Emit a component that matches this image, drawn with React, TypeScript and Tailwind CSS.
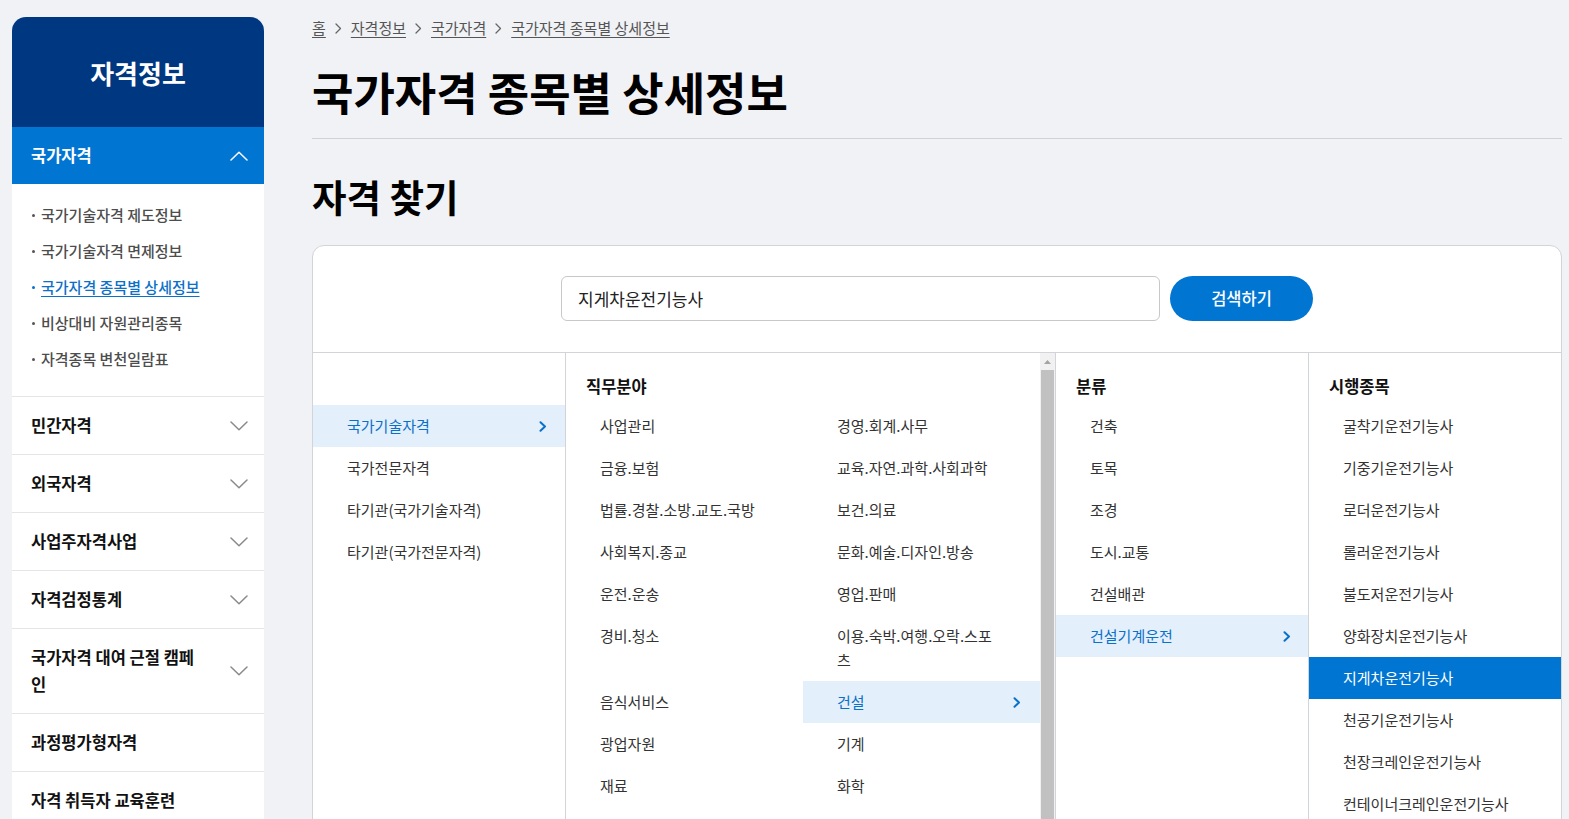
import React from 'react';

const FONT = "font-['Noto_Sans_CJK_KR','Noto_Sans',sans-serif]";

const subMenu = [
  { label: '국가기술자격 제도정보' },
  { label: '국가기술자격 면제정보' },
  { label: '국가자격 종목별 상세정보', active: true },
  { label: '비상대비 자원관리종목' },
  { label: '자격종목 변천일람표' },
];

const sideMenu = [
  { label: '민간자격', more: true },
  { label: '외국자격', more: true },
  { label: '사업주자격사업', more: true },
  { label: '자격검정통계', more: true },
  { label: '국가자격 대여 근절 캠페인', more: true },
  { label: '과정평가형자격', more: false },
  { label: '자격 취득자 교육훈련', more: false },
];

const types = ['국가기술자격', '국가전문자격', '타기관(국가기술자격)', '타기관(국가전문자격)'];

const fields = [
  '사업관리', '경영.회계.사무',
  '금융.보험', '교육.자연.과학.사회과학',
  '법률.경찰.소방.교도.국방', '보건.의료',
  '사회복지.종교', '문화.예술.디자인.방송',
  '운전.운송', '영업.판매',
  '경비.청소', '이용.숙박.여행.오락.스포츠',
  '음식서비스', '건설',
  '광업자원', '기계',
  '재료', '화학',
];

const groups = ['건축', '토목', '조경', '도시.교통', '건설배관', '건설기계운전'];

const items = [
  '굴착기운전기능사',
  '기중기운전기능사',
  '로더운전기능사',
  '롤러운전기능사',
  '불도저운전기능사',
  '양화장치운전기능사',
  '지게차운전기능사',
  '천공기운전기능사',
  '천장크레인운전기능사',
  '컨테이너크레인운전기능사',
];

const ChevronRight = () => (
  <svg width="8" height="11" viewBox="0 0 8 11" fill="none" className="shrink-0 self-center">
    <path d="M1.5 1.2 L6 5.5 L1.5 9.8" stroke="#0b70c8" strokeWidth="2" strokeLinecap="round" strokeLinejoin="round" />
  </svg>
);

const Caret = ({ up, color }: { up?: boolean; color: string }) => (
  <svg width="18" height="10" viewBox="0 0 18 10" fill="none" className="shrink-0">
    <path d={up ? 'M1 9 L9 1.2 L17 9' : 'M1 1 L9 8.8 L17 1'} stroke={color} strokeWidth="1.5" strokeLinecap="round" strokeLinejoin="round" />
  </svg>
);

const Crumb = () => (
  <svg width="7" height="11" viewBox="0 0 7 11" fill="none">
    <path d="M1 1 L5.5 5.5 L1 10" stroke="#666" strokeWidth="1.3" strokeLinecap="round" strokeLinejoin="round" />
  </svg>
);

const Heading = ({ children }: { children?: React.ReactNode }) => (
  <div className="h-[52px] pt-[21px] pl-5 text-[16.5px] leading-6 font-bold text-[#111]">{children}</div>
);

function Sidebar() {
  return (
    <aside className="w-[252px] shrink-0 ml-[12px] mt-[17px]">
      <div className="h-[110px] rounded-t-[14px] bg-[#003781] flex items-center justify-center text-white text-[26px] font-bold">
        자격정보
      </div>
      <div className="h-[57px] bg-[#0075d2] flex items-center justify-between pl-[19px] pr-[16px] text-white text-[16.5px] font-bold">
        <span>국가자격</span>
        <Caret up color="#ffffff" />
      </div>
      <ul className="bg-white pt-[13px] pb-[19px]">
        {subMenu.map((s) => (
          <li key={s.label} className="h-[36px] flex items-center pl-[20px] text-[15px] font-medium">
            <span className={`w-[3px] h-[3px] rounded-full mr-[6px] ${s.active ? 'bg-[#0b70c8]' : 'bg-[#555]'}`}></span>
            <span className={s.active ? 'text-[#0b70c8] underline underline-offset-[3px]' : 'text-[#4d4d4d]'}>{s.label}</span>
          </li>
        ))}
      </ul>
      <ul className="bg-white">
        {sideMenu.map((m) => (
          <li key={m.label} className="border-t border-[#e5e5e5] py-[15px] flex items-center justify-between pl-[19px] pr-[16px]">
            <span className="max-w-[176px] text-[16.5px] leading-[27px] font-bold text-[#111]">{m.label}</span>
            {m.more && <Caret color="#8a8a8a" />}
          </li>
        ))}
      </ul>
    </aside>
  );
}

function Finder() {
  return (
    <div className="mt-[27px] w-[1250px] rounded-t-[12px] border border-[#d3d4d9] bg-white">
      <div className="flex justify-center gap-[10px] pt-[30px] pb-[31px]">
        <input
          readOnly
          defaultValue="지게차운전기능사"
          className="w-[599px] h-[45px] rounded-[6px] border border-[#c8c8c8] px-[16px] text-[17px] text-[#222] outline-none"
        />
        <button className="w-[143px] h-[45px] rounded-full bg-[#0075d2] text-white text-[16.5px] font-medium">검색하기</button>
      </div>

      <div className="flex border-t border-[#d3d4d9] text-[15px] text-[#333]">
        {/* 자격구분 */}
        <div className="w-[253px] border-r border-[#d3d4d9]">
          <Heading />
          {types.map((t, i) => (
            <div
              key={t}
              className={`h-[42px] flex items-center justify-between pl-[34px] pr-[18px] ${i === 0 ? 'bg-[#e3effb] text-[#0b70c8]' : ''}`}
            >
              <span>{t}</span>
              {i === 0 && <ChevronRight />}
            </div>
          ))}
        </div>

        {/* 직무분야 */}
        <div className="w-[490px] flex border-r border-[#d3d4d9]">
          <div className="w-[474px]">
            <Heading>직무분야</Heading>
            <div className="grid grid-cols-2">
              {fields.map((f) => {
                const sel = f === '건설';
                return (
                  <div
                    key={f}
                    className={`flex items-start justify-between py-[9px] pl-[34px] pr-[19px] ${sel ? 'bg-[#e3effb] text-[#0b70c8]' : ''}`}
                  >
                    <span className="max-w-[163px] leading-6">{f}</span>
                    {sel && <ChevronRight />}
                  </div>
                );
              })}
            </div>
            <div className="h-[30px]"></div>
          </div>
          <div className="w-[15px] bg-[#f1f1f1] flex flex-col items-center">
            <div className="h-[17px] flex items-center justify-center">
              <svg width="7" height="4" viewBox="0 0 7 4">
                <path d="M0 4 L3.5 0 L7 4 Z" fill="#a3a3a3" />
              </svg>
            </div>
            <div className="w-[13px] flex-1 bg-[#c1c1c1]"></div>
          </div>
        </div>

        {/* 분류 */}
        <div className="w-[253px] border-r border-[#d3d4d9]">
          <Heading>분류</Heading>
          {groups.map((g) => {
            const sel = g === '건설기계운전';
            return (
              <div
                key={g}
                className={`h-[42px] flex items-center justify-between pl-[34px] pr-[17px] ${sel ? 'bg-[#e3effb] text-[#0b70c8]' : ''}`}
              >
                <span>{g}</span>
                {sel && <ChevronRight />}
              </div>
            );
          })}
        </div>

        {/* 시행종목 */}
        <div className="flex-1">
          <Heading>시행종목</Heading>
          {items.map((it) => {
            const sel = it === '지게차운전기능사';
            return (
              <div
                key={it}
                className={`h-[42px] flex items-center pl-[34px] pr-[17px] ${sel ? 'bg-[#0075d2] text-white' : ''}`}
              >
                {it}
              </div>
            );
          })}
        </div>
      </div>
    </div>
  );
}

export default function App() {
  return (
    <div className={`min-h-screen bg-[#f0f2f6] flex ${FONT}`}>
      <Sidebar />
      <main className="w-[1250px] ml-[48px]">
        <nav className="pt-[18px] flex items-center gap-[9px] text-[15px] leading-5 text-[#555]">
          <span className="underline underline-offset-[3px]">홈</span>
          <Crumb />
          <span className="underline underline-offset-[3px]">자격정보</span>
          <Crumb />
          <span className="underline underline-offset-[3px]">국가자격</span>
          <Crumb />
          <span className="underline underline-offset-[3px]">국가자격 종목별 상세정보</span>
        </nav>
        <h1 className="mt-[28px] pb-[20px] border-b border-[#cfd1d6] text-[45px] leading-[52px] font-bold text-black">
          국가자격 종목별 상세정보
        </h1>
        <h2 className="mt-[35px] text-[37.5px] leading-[44px] font-bold text-black">자격 찾기</h2>
        <Finder />
      </main>
    </div>
  );
}
